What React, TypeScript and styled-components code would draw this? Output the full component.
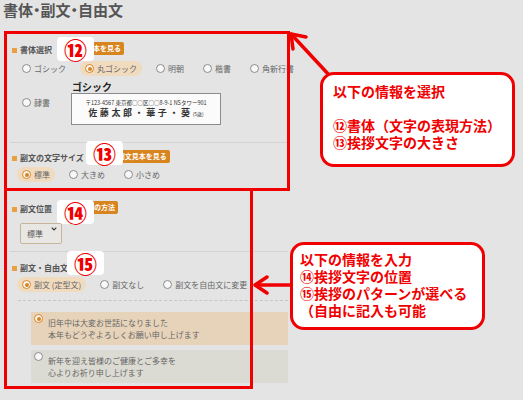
import React from "react";
import styled, { createGlobalStyle } from "styled-components";

const RED = "#f00000";
const ORANGE = "#d8841f";

const GlobalStyle = createGlobalStyle`
  html, body {
    margin: 0;
    padding: 0;
    background: #e4e4e4;
  }
  body {
    font-family: "Noto Sans CJK JP", "Noto Sans", sans-serif;
  }
`;

const fontNames = ["ゴシック", "丸ゴシック", "明朝", "楷書", "角新行書"];
const sizes = ["標準", "大きめ", "小さめ"];
const subModes = ["副文 (定型文)", "副文なし", "副文を自由文に変更"];
const greetings = [
  ["旧年中は大変お世話になりました", "本年もどうぞよろしくお願い申し上げます"],
  ["新年を迎え皆様のご健康とご多幸を", "心よりお祈り申し上げます"],
];

const Radio = ({ label, checked }: { label: string; checked?: boolean }) => (
  <RadioItem $checked={checked}>
    <RadioDot $checked={checked} />
    {label}
  </RadioItem>
);

const App: React.FC = () => {
  return (
    <>
      <GlobalStyle />
      <Page>
        <Title>書体・副文・自由文</Title>
        <Panel>
          <Section $pt={8} $pb={17}>
            <Header>
              <Label>書体選択</Label>
              <SampleButton $ml={17}>書体見本を見る</SampleButton>
              <Badge $x={45} $y={-5}>⑫</Badge>
            </Header>
            <RadioRow $mt={6}>
              {fontNames.map((name) => (
                <Radio key={name} label={name} checked={name === "丸ゴシック"} />
              ))}
            </RadioRow>
            <FontRow>
              <Radio label="隷書" />
              <Sample>
                <SampleTitle>ゴシック</SampleTitle>
                <SampleCard>
                  <Address>〒123-4567 東京都○○区○○8-9-1 NSタワー901</Address>
                  <Name>
                    佐藤太郎・華子・葵<small>(5歳)</small>
                  </Name>
                </SampleCard>
              </Sample>
            </FontRow>
          </Section>

          <Section $pt={7} $pb={7}>
            <Header>
              <Label>副文の文字サイズ</Label>
              <SampleButton $ml={31}>副文見本を見る</SampleButton>
              <Badge $x={74} $y={-9}>⑬</Badge>
            </Header>
            <RadioRow $mt={4}>
              {sizes.map((s) => (
                <Radio key={s} label={s} checked={s === "標準"} />
              ))}
            </RadioRow>
          </Section>

          <Section $pt={11} $pb={12}>
            <Header>
              <Label>副文位置</Label>
              <SampleButton $ml={25}>配置の方法</SampleButton>
              <Badge $x={45} $y={-1}>⑭</Badge>
            </Header>
            <SelectWrap>
              <SelectBox defaultValue="標準">
                <option>標準</option>
                <option>上寄せ</option>
                <option>下寄せ</option>
              </SelectBox>
              <Chevron width="6" height="4" viewBox="0 0 6 4">
                <polyline points="0.7,0.7 3,3 5.3,0.7" />
              </Chevron>
            </SelectWrap>
          </Section>

          <Section $pt={8} $pb={0} $last>
            <Header>
              <Label>副文・自由文</Label>
              <Badge $x={55} $y={-9}>⑮</Badge>
            </Header>
            <RadioRow $mt={4}>
              {subModes.map((m, i) => (
                <Radio key={m} label={m} checked={i === 0} />
              ))}
            </RadioRow>
            <OptionList>
              {greetings.map((lines, i) => (
                <OptionCard key={i} $checked={i === 0}>
                  <RadioDot $checked={i === 0} />
                  <OptionText>
                    {lines.map((l) => (
                      <div key={l}>{l}</div>
                    ))}
                  </OptionText>
                </OptionCard>
              ))}
            </OptionList>
          </Section>
        </Panel>

        <Frame $x={4} $y={31} $w={286} $h={160} />
        <Frame $x={4} $y={188} $w={249} $h={201} />

        <Arrows width="523" height="400" viewBox="0 0 523 400">
          <polyline points="330,76 291,34" />
          <polyline points="306,37 291,34 293,49" />
          <polyline points="292,285 256,285" />
          <polyline points="267,277 255,285 267,293" />
        </Arrows>

        <Callout $x={320} $y={72} $w={195} $h={95} $pt={8} $pl={10}>
          {["以下の情報を選択", "\u00a0", "⑫書体（文字の表現方法）", "⑬挨拶文字の大きさ"].map(
            (l, i) => (
              <div key={i}>{l}</div>
            )
          )}
        </Callout>
        <Callout $x={290} $y={242} $w={195} $h={88} $pt={6} $pl={7}>
          {[
            "以下の情報を入力",
            "⑭挨拶文字の位置",
            "⑮挨拶のパターンが選べる",
            "（自由に記入も可能",
          ].map((l, i) => (
            <div key={i}>{l}</div>
          ))}
        </Callout>
      </Page>
    </>
  );
};

export default App;

const Page = styled.div`
  position: relative;
  width: 523px;
  height: 400px;
  overflow: hidden;
  background: #e4e4e4;
  color: #666;
`;

const Title = styled.h1`
  margin: 0;
  padding-left: 3px;
  font-size: 15px;
  line-height: 20px;
  font-weight: 700;
  color: #555;
  font-feature-settings: "palt";
`;

const Panel = styled.div`
  margin: 14px 0 0 10px;
  width: 278px;
`;

const Section = styled.section<{ $pt: number; $pb: number; $last?: boolean }>`
  padding: ${(p) => p.$pt}px 0 ${(p) => p.$pb}px 2px;
  border-bottom: ${(p) => (p.$last ? "none" : "1px solid #d3d3d3")};
`;

const Header = styled.div`
  position: relative;
  display: flex;
  align-items: flex-end;
  height: 13px;
`;

const Label = styled.span`
  display: flex;
  align-items: center;
  font-size: 8px;
  line-height: 10px;
  font-weight: 700;
  color: #555;
  white-space: nowrap;

  &::before {
    content: "";
    width: 5px;
    height: 5px;
    margin-right: 3px;
    background: #e8a043;
  }
`;

const SampleButton = styled.span<{ $ml: number }>`
  margin-left: ${(p) => p.$ml}px;
  height: 13px;
  padding: 0 3px;
  border-radius: 2px;
  background: ${ORANGE};
  color: #fff;
  font-size: 7px;
  font-weight: 700;
  line-height: 13px;
  white-space: nowrap;
`;

const Badge = styled.span<{ $x: number; $y: number }>`
  position: absolute;
  left: ${(p) => p.$x}px;
  top: ${(p) => p.$y}px;
  width: 37px;
  height: 24px;
  border-radius: 4px;
  background: #fff;
  display: flex;
  align-items: center;
  justify-content: center;
  color: ${RED};
  font-size: 23px;
  font-weight: 900;
  line-height: 1;
`;

const RadioRow = styled.div<{ $mt: number }>`
  display: flex;
  align-items: center;
  gap: 9px;
  margin: ${(p) => p.$mt}px 0 0 5px;
`;

const RadioItem = styled.label<{ $checked?: boolean }>`
  display: inline-flex;
  align-items: center;
  gap: 3px;
  height: 15px;
  padding: 0 5px;
  border-radius: 8px;
  background: ${(p) => (p.$checked ? "#f1dbbf" : "transparent")};
  font-size: 8px;
  color: #666;
  white-space: nowrap;
`;

const RadioDot = styled.span<{ $checked?: boolean }>`
  position: relative;
  flex-shrink: 0;
  box-sizing: border-box;
  width: 9px;
  height: 9px;
  border-radius: 50%;
  border: 1px solid ${(p) => (p.$checked ? ORANGE : "#8a8a8a")};
  background: #f8f8f8;

  &::after {
    content: "";
    display: ${(p) => (p.$checked ? "block" : "none")};
    position: absolute;
    inset: 1.5px;
    border-radius: 50%;
    background: ${ORANGE};
  }
`;

const FontRow = styled.div`
  display: flex;
  align-items: center;
  gap: 16px;
  margin: 4px 0 0 5px;
`;

const Sample = styled.div`
  display: flex;
  flex-direction: column;
`;

const SampleTitle = styled.div`
  padding-left: 1px;
  font-size: 10px;
  line-height: 13px;
  font-weight: 700;
  color: #222;
`;

const SampleCard = styled.div`
  box-sizing: border-box;
  width: 150px;
  height: 32px;
  border: 1px solid #8c8c8c;
  background: #fbfbfb;
  display: flex;
  flex-direction: column;
  align-items: center;
  justify-content: center;
  color: #333;
`;

const Address = styled.div`
  font-size: 5.5px;
  line-height: 8px;
  white-space: nowrap;
`;

const Name = styled.div`
  font-size: 9px;
  line-height: 11px;
  font-weight: 700;
  letter-spacing: 2.6px;
  white-space: nowrap;

  small {
    font-size: 5px;
    font-weight: 400;
    letter-spacing: 0;
  }
`;

const SelectWrap = styled.div`
  position: relative;
  width: 42px;
  height: 21px;
  margin: 4px 0 0 8px;
`;

const SelectBox = styled.select`
  appearance: none;
  box-sizing: border-box;
  width: 100%;
  height: 100%;
  padding: 0 0 0 6px;
  border: 1px solid #c7b49b;
  border-radius: 2px;
  background: #e9e7e4;
  color: #555;
  font-family: "Noto Sans CJK JP", sans-serif;
  font-size: 8px;
  outline: none;
`;

const Chevron = styled.svg`
  position: absolute;
  right: 5px;
  top: 9px;
  pointer-events: none;
  fill: none;
  stroke: #333;
  stroke-width: 1.1;
`;

const OptionList = styled.div`
  display: flex;
  flex-direction: column;
  gap: 5px;
  margin: 8px 0 0 6px;
  padding: 11px 0 0 13px;
  border-top: 1px dashed #c6c6c6;
`;

const OptionCard = styled.div<{ $checked?: boolean }>`
  display: flex;
  align-items: flex-start;
  gap: 5px;
  padding: 2px 0 5px 3px;
  background: ${(p) => (p.$checked ? "#e7d3ba" : "#dcdbd3")};
  font-size: 8px;
  line-height: 11.5px;
  color: #666;
`;

const OptionText = styled.div`
  margin-top: 3px;
  white-space: nowrap;
`;

const Frame = styled.div<{ $x: number; $y: number; $w: number; $h: number }>`
  position: absolute;
  left: ${(p) => p.$x}px;
  top: ${(p) => p.$y}px;
  width: ${(p) => p.$w}px;
  height: ${(p) => p.$h}px;
  box-sizing: border-box;
  border: 3px solid ${RED};
  pointer-events: none;
`;

const Arrows = styled.svg`
  position: absolute;
  left: 0;
  top: 0;
  pointer-events: none;
  fill: none;
  stroke: ${RED};
  stroke-width: 3.5;
  stroke-linecap: round;
  stroke-linejoin: round;
`;

const Callout = styled.div<{
  $x: number;
  $y: number;
  $w: number;
  $h: number;
  $pt: number;
  $pl: number;
}>`
  position: absolute;
  left: ${(p) => p.$x}px;
  top: ${(p) => p.$y}px;
  width: ${(p) => p.$w}px;
  height: ${(p) => p.$h}px;
  box-sizing: border-box;
  padding: ${(p) => p.$pt}px 0 0 ${(p) => p.$pl}px;
  border: 3px solid ${RED};
  border-radius: 14px;
  background: #fff;
  color: ${RED};
  font-size: 14px;
  line-height: 17px;
  font-weight: 700;
  white-space: nowrap;
`;
